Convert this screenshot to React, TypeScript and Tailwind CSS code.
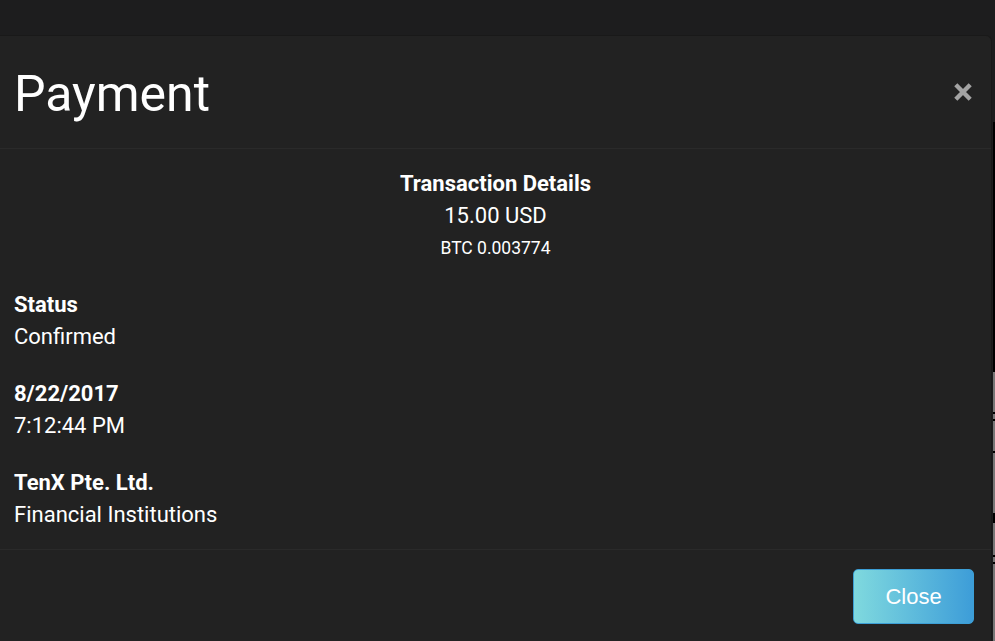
import React from 'react';

const rows = [
  { label: 'Status', value: 'Confirmed' },
  { label: '8/22/2017', value: '7:12:44 PM' },
  { label: 'TenX Pte. Ltd.', value: 'Financial Institutions' },
];

const App = () => (
  <div className="relative h-[641px] w-[995px] overflow-hidden bg-[#1d1d1e] pt-[35px] font-['Roboto',sans-serif] text-white">
    {/* edge of the page behind the modal */}
    <div className="absolute right-0 top-[122px] h-[250px] w-[2px] bg-black" />
    <div className="absolute bottom-0 right-0 top-[372px] flex w-[2px] flex-col bg-[#777]">
      <div className="mt-[40px] h-[2px] bg-black" />
      <div className="mt-[5px] h-[2px] bg-black" />
      <div className="mt-[30px] h-[2px] bg-black" />
      <div className="mt-[60px] h-[10px] bg-black" />
      <div className="mt-[32px] h-[2px] bg-black" />
      <div className="mt-[5px] h-[2px] bg-black" />
    </div>

    <div className="w-[992px] rounded-tr-[6px] border-r border-t border-[#191919] bg-[#222222]">
      <div className="flex h-[113px] items-center justify-between border-b border-[#2a2a2a] pl-[14px] pr-[18px]">
        <h1 className="mt-[3px] text-[50px] font-normal leading-none">Payment</h1>
        <button className="text-[#a3a3a3]" aria-label="close">
          <svg width="20" height="20" viewBox="0 0 20 20">
            <path d="M2.8 2.8 L17.2 17.2 M17.2 2.8 L2.8 17.2" stroke="currentColor" strokeWidth="4.4" strokeLinecap="butt" />
          </svg>
        </button>
      </div>

      <div className="px-[14px] pb-[18px] pt-[19px]">
        <div className="mb-[25px] text-center">
          <div className="text-[22px] font-bold leading-[32px]">Transaction Details</div>
          <div className="text-[22px] leading-[32px]">15.00 USD</div>
          <div className="text-[17.5px] font-normal leading-[32px]">BTC 0.003774</div>
        </div>
        {rows.map((r, i) => (
          <div key={r.label} className={i < rows.length - 1 ? 'mb-[25px]' : ''}>
            <div className="text-[22px] font-bold leading-[32px]">{r.label}</div>
            <div className="text-[22px] leading-[32px]">{r.value}</div>
          </div>
        ))}
      </div>

      <div className="flex justify-end border-t border-[#2a2a2a] pb-[20px] pr-[17px] pt-[19px]">
        <button className="h-[55px] w-[121px] rounded-[5px] border border-[#3c9fd6] bg-gradient-to-r from-[#7fd9de] to-[#3d9dd8] font-['Liberation_Sans',Arial,sans-serif] text-[22px] text-white">
          Close
        </button>
      </div>
    </div>
  </div>
);

export default App;
